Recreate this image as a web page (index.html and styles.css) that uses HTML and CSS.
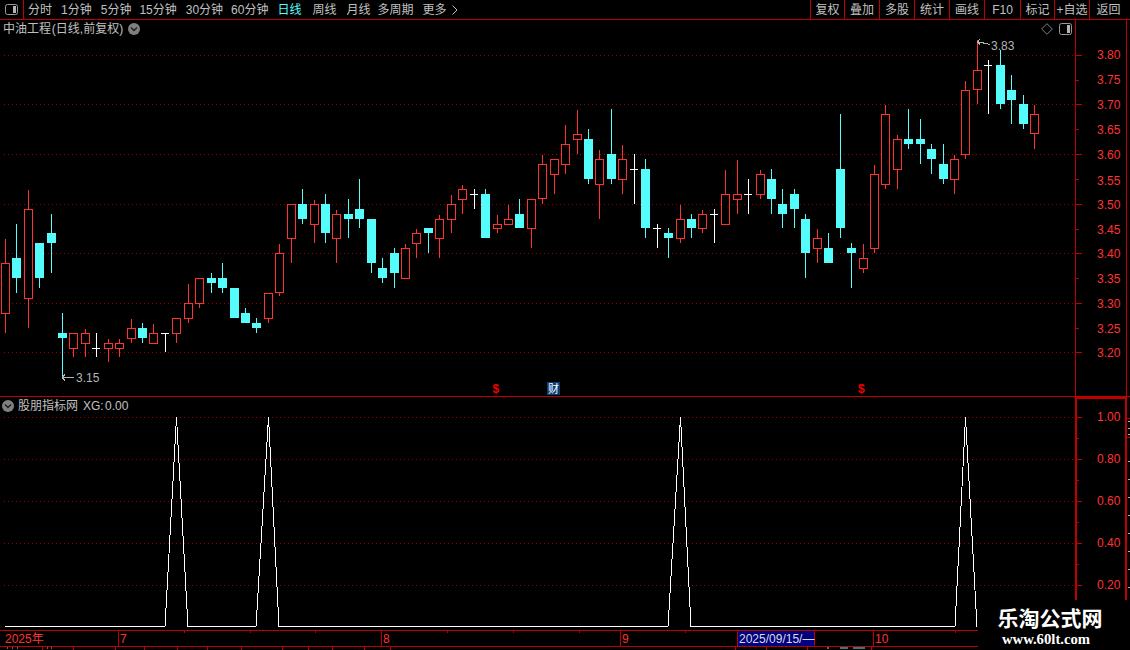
FILE: index.html
```html
<!DOCTYPE html>
<html lang="zh-CN">
<head>
<meta charset="utf-8">
<title>中油工程 日线</title>
<link rel="stylesheet" href="styles.css">
</head>
<body>
<div class="app">
  <header class="toolbar">
    <div class="tool-icon">
      <svg class="pane-icon" width="13" height="11" viewBox="0 0 13 11"><rect x="0.5" y="0.5" width="12" height="10" rx="2" class="pane-frame"/><rect x="8" y="2" width="3" height="7" class="pane-fill"/></svg>
    </div>
    <nav class="periods">
      <span>分时</span><span class="g1">1分钟</span><span class="g1">5分钟</span><span>15分钟</span><span class="g1">30分钟</span><span>60分钟</span><span class="on g1">日线</span><span class="g3">周线</span><span class="g2">月线</span><span class="gn">多周期</span><span class="more g1">更多<svg class="more-chev" width="6" height="10" viewBox="0 0 6 10"><path d="M.5 .5L5 5 .5 9.5"/></svg></span>
    </nav>
    <nav class="actions">
      <span>复权</span><span>叠加</span><span>多股</span><span>统计</span><span>画线</span><span>F10</span><span>标记</span><span>+自选</span><span class="back">返回</span>
    </nav>
  </header>

  <section class="panel price">
    <div class="panel-head">
      <div class="title"><span class="name">中油工程 (日线,前复权)</span>
        <svg class="chev" width="12" height="12" viewBox="0 0 12 12"><circle cx="6" cy="6" r="6"/><path d="M3 4.5l3 3 3-3"/></svg>
      </div>
      <div class="head-icons">
        <svg class="diamond" width="12" height="12" viewBox="0 0 12 12"><path d="M6 .7L11.3 6 6 11.3 .7 6z"/></svg>
        <svg class="pane-icon" width="13" height="12" viewBox="0 0 13 12"><rect x="0.5" y="0.5" width="12" height="11" rx="2" class="pane-frame"/><rect x="8" y="2" width="3" height="8" class="pane-fill"/></svg>
      </div>
    </div>
    <svg class="plot" width="1130" height="376" viewBox="0 20 1130 376">
      <defs>
        <pattern id="dot" width="4" height="1" patternUnits="userSpaceOnUse"><rect class="dot-cell" width="1" height="1"/></pattern>
      </defs>
      <g class="dots">
        <rect x="1" y="55" width="1074" height="1"/><rect x="1" y="104" width="1074" height="1"/><rect x="1" y="154" width="1074" height="1"/><rect x="1" y="204" width="1074" height="1"/><rect x="1" y="253" width="1074" height="1"/><rect x="1" y="303" width="1074" height="1"/><rect x="1" y="352" width="1074" height="1"/>
      </g>
      <path class="axis-line" d="M1075.5 20V396M1126.5 20V396"/>
      <path class="axis-line" d="M1076 55.5h6M1076 80.5h3M1076 104.5h6M1076 129.5h3M1076 154.5h6M1076 179.5h3M1076 204.5h6M1076 229.5h3M1076 253.5h6M1076 278.5h3M1076 303.5h6M1076 328.5h3M1076 352.5h6"/>
      <g class="labels">
        <text x="1097" y="59">3.80</text><text x="1097" y="84">3.75</text><text x="1097" y="109">3.70</text><text x="1097" y="134">3.65</text><text x="1097" y="159">3.60</text><text x="1097" y="185">3.55</text><text x="1097" y="209">3.50</text><text x="1097" y="234">3.45</text><text x="1097" y="258">3.40</text><text x="1097" y="283">3.35</text><text x="1097" y="308">3.30</text><text x="1097" y="333">3.25</text><text x="1097" y="357">3.20</text>
      </g>
      <path class="wick-cyan" d="M16.5 224V293M39.5 243V288M51.5 214V273M62.5 313V377M142.5 323V343M211.5 273V293M222.5 263V293M245.5 308V323M256.5 318V333M302.5 189V224M325.5 194V243M348.5 199V238M359.5 179V228M371.5 219V273M382.5 258V283M394.5 248V288M428.5 228V253M485.5 189V238M519.5 199V228M588.5 129V184M611.5 109V184M645.5 159V238M668.5 228V258M691.5 214V238M771.5 169V214M782.5 189V228M794.5 189V228M805.5 214V278M828.5 233V263M840.5 114V238M851.5 243V288M908.5 109V149M920.5 119V164M931.5 144V174M943.5 144V184M1000.5 50V109M1011.5 75V124M1023.5 95V129"/>
      <path class="body-cyan" d="M12 258h9v20h-9zM35 243h9v35h-9zM47 233h9v10h-9zM58 333h9v5h-9zM138 328h9v10h-9zM207 278h9v5h-9zM218 278h9v10h-9zM230 288h9v30h-9zM241 313h9v10h-9zM252 323h9v5h-9zM298 204h9v15h-9zM321 204h9v29h-9zM344 214h9v5h-9zM355 209h9v10h-9zM367 219h9v44h-9zM378 268h9v10h-9zM390 253h9v20h-9zM424 228h9v5h-9zM481 194h9v44h-9zM515 214h9v14h-9zM584 139h9v40h-9zM607 154h9v25h-9zM641 169h9v59h-9zM664 233h9v5h-9zM687 219h9v9h-9zM767 179h9v20h-9zM778 204h9v10h-9zM790 194h9v15h-9zM801 219h9v34h-9zM824 248h9v15h-9zM836 169h9v59h-9zM847 248h9v5h-9zM904 139h9v5h-9zM916 139h9v5h-9zM927 149h9v10h-9zM939 164h9v15h-9zM996 65h9v39h-9zM1007 90h9v10h-9zM1019 104h9v20h-9z"/>
      <path class="wick-red" d="M5.5 239V333M28.5 190V328M73.5 333V357M85.5 329V357M108.5 339V362M119.5 339V357M131.5 319V343M153.5 324V344M176.5 318V343M188.5 284V323M199.5 278V308M268.5 293V323M279.5 244V296M291.5 204V263M314.5 200V243M336.5 210V263M405.5 244V279M416.5 229V258M439.5 215V258M451.5 195V233M462.5 185V214M497.5 215V233M508.5 205V225M531.5 199V248M542.5 155V204M554.5 159V194M565.5 125V174M577.5 110V154M599.5 150V219M622.5 145V194M680.5 205V243M702.5 210V233M725.5 170V225M737.5 160V214M760.5 170V199M817.5 229V263M863.5 244V273M874.5 165V253M885.5 105V189M897.5 135V189M954.5 155V194M965.5 81V159M977.5 40V104M1034.5 105V149"/>
      <path class="body-red" d="M1.5 263.5h8v50h-8zM24.5 209.5h8v89h-8zM69.5 333.5h8v15h-8zM81.5 333.5h8v10h-8zM104.5 343.5h8v5h-8zM115.5 343.5h8v5h-8zM127.5 328.5h8v10h-8zM149.5 333.5h8v10h-8zM172.5 318.5h8v15h-8zM184.5 303.5h8v15h-8zM195.5 278.5h8v25h-8zM264.5 293.5h8v25h-8zM275.5 253.5h8v39h-8zM287.5 204.5h8v34h-8zM310.5 204.5h8v20h-8zM332.5 214.5h8v24h-8zM401.5 248.5h8v30h-8zM412.5 233.5h8v10h-8zM435.5 219.5h8v19h-8zM447.5 204.5h8v15h-8zM458.5 189.5h8v10h-8zM493.5 224.5h8v4h-8zM504.5 219.5h8v5h-8zM527.5 199.5h8v29h-8zM538.5 164.5h8v34h-8zM550.5 159.5h8v15h-8zM561.5 144.5h8v20h-8zM573.5 134.5h8v5h-8zM595.5 159.5h8v25h-8zM618.5 159.5h8v20h-8zM676.5 219.5h8v19h-8zM698.5 214.5h8v14h-8zM721.5 194.5h8v30h-8zM733.5 194.5h8v5h-8zM756.5 174.5h8v20h-8zM813.5 238.5h8v10h-8zM859.5 258.5h8v10h-8zM870.5 174.5h8v74h-8zM881.5 114.5h8v70h-8zM893.5 139.5h8v30h-8zM950.5 159.5h8v20h-8zM961.5 90.5h8v64h-8zM973.5 70.5h8v19h-8zM1030.5 114.5h8v19h-8z"/>
      <path class="wick-white" d="M96.5 333V357M92 348.5h8M165.5 333V352M161 333.5h8M474.5 189V209M470 194.5h8M634.5 154V204M630 169.5h8M657.5 224V248M653 228.5h8M714.5 209V243M710 214.5h8M748.5 179V214M744 194.5h8M988.5 60V114M984 65.5h8"/>
      <path class="note" d="M62 377.5h12M62 377.5l3-3M62 377.5l3 3M977 41.5l3-2M977 41.5l3 3M977 41.5L990 44.5"/>
      <text class="note-text" x="76" y="382">3.15</text>
      <text class="note-text" x="991" y="50">3.83</text>
      <text class="sig" x="492.500" y="393">$</text>
      <text class="sig" x="858" y="393">$</text>
      <rect class="cai-box" x="547" y="382" width="13" height="13"/>
      <text class="cai" x="548" y="393">财</text>
    </svg>
  </section>

  <section class="panel indicator">
    <div class="panel-head">
      <div class="title low">
        <svg class="chev" width="12" height="12" viewBox="0 0 12 12"><circle cx="6" cy="6" r="6"/><path d="M3 4.5l3 3 3-3"/></svg>
        <span>股朋指标网</span><span class="xg-val">XG: 0.00</span>
      </div>
    </div>
    <svg class="plot" width="1130" height="233" viewBox="0 397 1130 233">
      <g class="dots">
        <rect x="1" y="417" width="1074" height="1"/><rect x="1" y="459" width="1074" height="1"/><rect x="1" y="501" width="1074" height="1"/><rect x="1" y="543" width="1074" height="1"/><rect x="1" y="585" width="1074" height="1"/>
      </g>
      <path class="axis-thick" d="M1076 397V630M1126 397V630M1075 398H1127"/>
      <path class="axis-line" d="M1076 417.5h6M1076 438.5h3M1076 459.5h6M1076 480.5h3M1076 501.5h6M1076 522.5h3M1076 543.5h6M1076 564.5h3M1076 585.5h6M1076 606.5h3M1126 418.5h4M1126 437.5h4"/>
      <path class="ticks-grey" d="M1128 421.500h2M1128 428.500h2M1128 434.500h2M1128 461.500h2M1128 479.500h2M1128 497.500h2M1128 515.500h2M1128 533.500h2M1128 551.500h2M1128 569.500h2M1128 587.500h2"/>
      <g class="labels">
        <text x="1097" y="421">1.00</text><text x="1097" y="463">0.80</text><text x="1097" y="505">0.60</text><text x="1097" y="547">0.40</text><text x="1097" y="589">0.20</text>
      </g>
      <polyline class="xg" points="5,626.5 165,626.5 176.5,417 188,626.5 256,626.5 268.5,417 279,626.5 668,626.5 680.5,417 691,626.5 955,626.5 965.5,417 977,626.5"/>
    </svg>
  </section>

  <footer class="dates">
    <span>2025年</span><span class="m">7</span><span class="m">8</span><span class="m">9</span><span class="cur">2025/09/15/—</span><span></span><span class="m">10</span>
    <svg class="date-ticks" width="1130" height="20" viewBox="0 630 1130 20">
      <path d="M184.5 631v2M250.5 631v2M315.5 631v2M447.5 631v2M513.5 631v2M579.5 631v2M685.5 631v2M955.5 631v2M42.5 647v3M73.5 647v3M115.5 647v3M144.5 647v3M177.5 647v3M207.5 647v3M241.5 647v3M282.5 647v3M308.5 647v3M332.5 647v3M364.5 647v3M390.5 647v3M735.5 647v3M766.5 647v3M807.5 647v3M871.5 647v3"/>
      <path class="bits" d="M7 648h1M12 648h1M17 648h1M47 648h1M51 648h1M827 648h2"/>
      <path class="bits-cyan" d="M840 648h8M853 648h12"/>
    </svg>
  </footer>
  <aside class="mark">
    <strong>乐淘公式网</strong>
    <em>www.60lt.com</em>
  </aside>
</div>
</body>
</html>
```

FILE: styles.css
```css
* { box-sizing: border-box; }
html, body { margin: 0; background: #000; }
.app {
  position: relative;
  width: 1130px;
  height: 650px;
  overflow: hidden;
  background: #000;
  color: #c0c0c0;
  font: 12px/1 "Liberation Sans", "Noto Sans CJK SC", sans-serif;
}
.toolbar {
  display: flex;
  align-items: stretch;
  height: 20px;
  border-bottom: 1px solid #c00000;
}
.tool-icon {
  width: 24px;
  display: flex;
  align-items: center;
  justify-content: center;
  border-right: 1px solid #c00000;
}
.pane-frame { fill: #000; stroke: #9a9a9a; }
.pane-fill { fill: #b5b5b5; }
.periods {
  display: flex;
  align-items: center;
  gap: 8px;
  padding-left: 4px;
  flex: 1;
}
.periods .g1 { margin-left: 1px; }
.periods .g2 { margin-left: 2px; }
.periods .g3 { margin-left: 3px; }
.periods .gn { margin-left: -1px; }
.periods .on { color: #54fcfc; }
.more { display: flex; align-items: center; gap: 5px; }
.more-chev path { fill: none; stroke: #c0c0c0; }
.actions {
  display: grid;
  grid-template-columns: 34px 35px 35px 35px 35px 36px 34px 35px 41px;
}
.actions span {
  display: flex;
  align-items: center;
  justify-content: center;
  border-left: 1px solid #c00000;
}
.actions .back { padding-right: 3px; }
.panel { position: relative; }
.price { height: 377px; border-bottom: 1px solid #c00000; }
.indicator { height: 233px; }
.plot { display: block; shape-rendering: crispEdges; }
.panel-head {
  position: absolute;
  top: 2px;
  left: 0;
  right: 55px;
  display: flex;
  align-items: center;
  justify-content: space-between;
}
.title { display: flex; align-items: center; gap: 5px; padding-left: 3px; height: 14px; }
.title .name { word-spacing: -2.5px; }
.title.low { padding-left: 2px; gap: 4px; }
.title.low .xg-val { margin-left: 1px; word-spacing: -2px; }
.head-icons { display: flex; align-items: center; gap: 6px; padding-right: 3px; }
.chev circle { fill: #808080; }
.chev path { fill: none; stroke: #1c1c1c; stroke-width: 1.4; }
.diamond path { fill: none; stroke: #808080; }
.dot-cell { fill: #a00000; }
.dots rect { fill: url(#dot); }
.axis-line { fill: none; stroke: #c00000; }
.axis-thick { fill: none; stroke: #c00000; stroke-width: 2; }
.ticks-grey { fill: none; stroke: #b0b0b0; }
.labels text { fill: #ff3232; font-size: 12px; }
.wick-cyan { fill: none; stroke: #54fcfc; }
.body-cyan { fill: #54fcfc; }
.wick-red { fill: none; stroke: #ff3232; }
.body-red { fill: #000; stroke: #ff3232; }
.wick-white { fill: none; stroke: #fff; }
.note { fill: none; stroke: #b4b4b4; }
.note-text { fill: #b4b4b4; font-size: 12px; }
.sig { fill: #f00000; font-size: 12px; font-weight: bold; }
.cai-box { fill: #0a3c73; }
.cai { fill: #fff; font-size: 11px; }
.xg { fill: none; stroke: #fff; }
.dates {
  position: relative;
  display: grid;
  grid-template-columns: 118px 263px 239px 117px 78px 58px 257px;
  grid-template-rows: 15px;
  height: 17px;
  border-top: 1px solid #c00000;
  border-bottom: 1px solid #c00000;
  color: #ff3232;
  align-items: stretch;
}
.dates span { display: flex; align-items: center; padding-left: 5px; white-space: nowrap; }
.dates .m { border-left: 1px solid #c00000; padding-left: 1px; }
.dates .cur {
  background: #000080;
  color: #dcdcdc;
  border: 1px solid #c00000;
  border-width: 0 1px;
  padding-left: 1px;
}
.date-ticks { position: absolute; left: 0; top: -1px; }
.date-ticks path { fill: none; stroke: #c00000; }
.date-ticks .bits { stroke: #c8c8c8; }
.date-ticks .bits-cyan { stroke: #54fcfc; }
.mark {
  position: absolute;
  left: 978px;
  top: 600px;
  width: 152px;
  height: 50px;
  background: #000;
  display: flex;
  flex-direction: column;
  align-items: center;
  padding: 5px 8px 0 0;
}
.mark strong {
  color: #fff;
  font: bold 21px/24px "Noto Sans CJK SC", sans-serif;
}
.mark em {
  color: #fff;
  font: bold 14.7px/18px "Liberation Serif", serif;
  margin: 1px 8px 0 0;
}
```
